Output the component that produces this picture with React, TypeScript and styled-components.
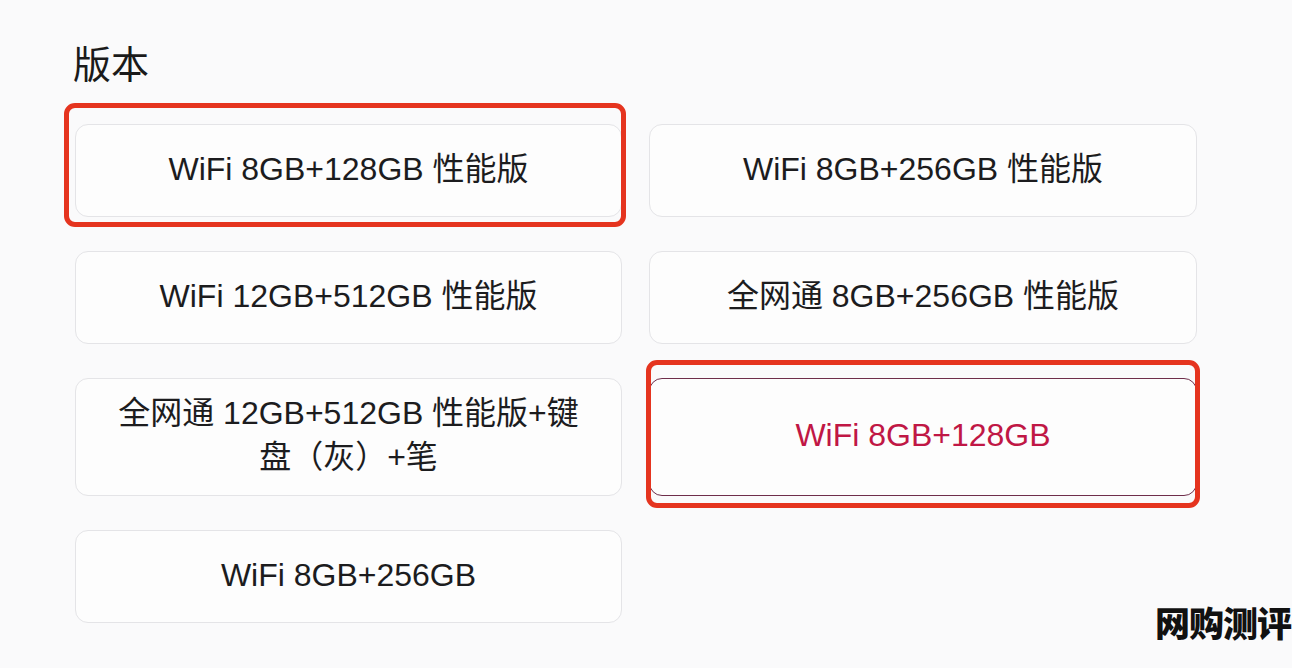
import styled, { createGlobalStyle } from 'styled-components';

const GlobalStyle = createGlobalStyle`
  html, body {
    margin: 0;
    padding: 0;
    background: #fafafb;
  }
  body {
    font-family: "Liberation Sans", "Noto Sans CJK SC", sans-serif;
    color: #1c1c1e;
  }
`;

const Page = styled.div`
  position: relative;
  box-sizing: border-box;
  min-height: 100vh;
  padding: 39px 96px 0 75px;
  overflow: hidden;
`;

const Title = styled.h2`
  margin: 0 0 39px -2px;
  font-family: "Noto Sans CJK SC", sans-serif;
  font-size: 38px;
  font-weight: 400;
  line-height: 46px;
  color: #1a1a1a;
`;

const OptionGrid = styled.div`
  display: grid;
  grid-template-columns: 547px 548px;
  column-gap: 27px;
  row-gap: 34px;
`;

const Option = styled.div<{ $selected?: boolean }>`
  position: relative;
  box-sizing: border-box;
  min-height: 93px;
  padding: 12px 35px 16px;
  display: flex;
  align-items: center;
  justify-content: center;
  text-align: center;
  background: #fdfdfd;
  border: 1px solid ${(p) => (p.$selected ? '#6e2d4a' : '#e4e4e7')};
  border-radius: 13px;
  font-size: 32px;
  line-height: 44px;
  color: ${(p) => (p.$selected ? '#c01745' : '#1c1c1e')};
`;

type Offsets = { top: number; right: number; bottom: number; left: number };

const Highlight = styled.span<{ $o: Offsets }>`
  position: absolute;
  top: ${(p) => -p.$o.top}px;
  right: ${(p) => -p.$o.right}px;
  bottom: ${(p) => -p.$o.bottom}px;
  left: ${(p) => -p.$o.left}px;
  border: 5px solid #e5341f;
  border-radius: 11px;
  pointer-events: none;
`;

const Watermark = styled.div`
  position: absolute;
  right: 1px;
  bottom: 24px;
  font-family: "Noto Sans CJK SC", sans-serif;
  font-size: 35px;
  font-weight: 900;
  line-height: 44px;
  color: #111;
  letter-spacing: -1px;
`;

const options = [
  { label: 'WiFi 8GB+128GB 性能版', mark: { top: 22, right: 5, bottom: 11, left: 12 } },
  { label: 'WiFi 8GB+256GB 性能版' },
  { label: 'WiFi 12GB+512GB 性能版' },
  { label: '全网通 8GB+256GB 性能版' },
  { label: '全网通 12GB+512GB 性能版+键盘（灰）+笔' },
  { label: 'WiFi 8GB+128GB', selected: true, mark: { top: 19, right: 4, bottom: 13, left: 4 } },
  { label: 'WiFi 8GB+256GB' },
];

export default function App() {
  return (
    <>
      <GlobalStyle />
      <Page>
        <Title>版本</Title>
        <OptionGrid>
          {options.map((opt) => (
            <Option key={opt.label} $selected={opt.selected}>
              {opt.label}
              {opt.mark && <Highlight $o={opt.mark} />}
            </Option>
          ))}
        </OptionGrid>
        <Watermark>网购测评</Watermark>
      </Page>
    </>
  );
}
